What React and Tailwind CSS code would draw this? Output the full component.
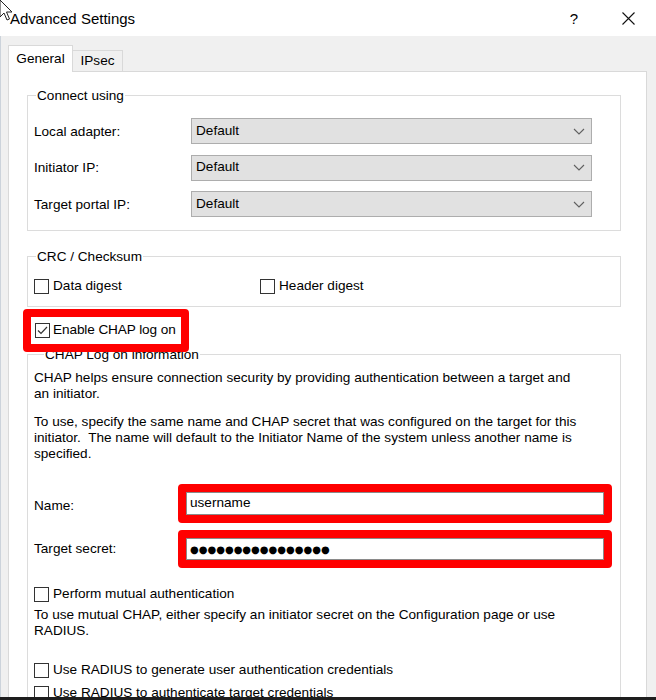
import React from 'react';

const font = "font-['Liberation_Sans',Arial,sans-serif]";

function Check({ checked }) {
  return (
    <span className="flex h-[15px] w-[15px] shrink-0 items-center justify-center border border-[#333] bg-white">
      {checked && (
        <svg width="13" height="13" viewBox="0 0 13 13" fill="none">
          <path d="M2 6.5 L5 9.5 L11 3" stroke="#333" strokeWidth="1.2" />
        </svg>
      )}
    </span>
  );
}

function CheckRow({ label, checked, className = '' }) {
  return (
    <div className={`flex h-[16px] items-center gap-[4px] ${className}`}>
      <Check checked={checked} />
      <span className="leading-[16px]">{label}</span>
    </div>
  );
}

function Combo({ label }) {
  return (
    <div className="flex h-[26px] items-center">
      <span className="w-[157px] shrink-0 pt-[2px]">{label}</span>
      <div className="flex h-[26px] w-[401px] items-center justify-between border border-[#adadad] bg-[#e1e1e1] pl-[4px] pr-[6px]">
        <span>Default</span>
        <svg width="12" height="7" viewBox="0 0 12 7" fill="none">
          <path d="M1 1 L6 6 L11 1" stroke="#606060" strokeWidth="1.1" />
        </svg>
      </div>
    </div>
  );
}

function Legend({ children, className = '' }) {
  return (
    <div className={`-mt-[8.5px] w-fit bg-white px-[1px] leading-[16px] ${className}`}>{children}</div>
  );
}

export default function App() {
  return (
    <div className={`relative h-[700px] w-[656px] overflow-hidden bg-[#f0f0f0] text-[13.6px] text-black ${font}`}>
      {/* title bar */}
      <div className="flex h-[36px] items-center bg-white pl-[10px]">
        <span className="text-[15px] leading-none">Advanced Settings</span>
        <span className="ml-auto text-[15px] leading-none">?</span>
        <svg className="ml-[44px] mr-[21px]" width="13" height="13" viewBox="0 0 13 13">
          <path d="M0.5 0.5 L12.5 12.5 M12.5 0.5 L0.5 12.5" stroke="#111" strokeWidth="1.1" />
        </svg>
      </div>

      {/* cursor */}
      <svg className="absolute left-[-1px] top-[-1px]" width="16" height="24" viewBox="0 0 16 24">
        <path d="M1 1 L1 18 L5 14 L8 21 L10.5 20 L7.5 13 L13 13 Z" fill="white" stroke="#222" strokeWidth="1" />
      </svg>

      <div className="flex h-[664px] flex-col border-l border-[#ccd3db] pl-[7px] pr-[9px] pt-[9px]">
        {/* tabs */}
        <div className="flex h-[26px] items-end">
          <div className="relative z-10 -mb-px flex h-[27px] w-[65px] items-center justify-center border border-b-0 border-[#d9d9d9] bg-white">
            General
          </div>
          <div className="flex h-[21px] w-[50px] items-center justify-center border border-b-0 border-l-0 border-[#d9d9d9] bg-[#f0f0f0]">
            IPsec
          </div>
        </div>

        {/* tab page */}
        <div className="flex-1 border border-[#d9d9d9] bg-white pl-[18px] pr-[25px] pt-[23px]">
          <div className="border border-[#dcdcdc] pb-[13px] pl-[6px] pr-[28px]">
            <Legend className="ml-[2px]">Connect using</Legend>
            <div className="mt-[14.5px] flex flex-col gap-[10.5px]">
              <Combo label="Local adapter:" />
              <Combo label="Initiator IP:" />
              <Combo label="Target portal IP:" />
            </div>
          </div>

          <div className="mt-[25px] border border-[#dcdcdc] pb-[12px] pl-[6px]">
            <Legend className="ml-[2px]">CRC / Checksum</Legend>
            <div className="mt-[13.5px] flex">
              <CheckRow label="Data digest" className="w-[226px]" />
              <CheckRow label="Header digest" />
            </div>
          </div>

          <div className="relative z-10 -ml-[4px] mt-[2px] h-[43px] w-[166px] rounded-[4px] border-[8px] border-[#ff0000] pl-[4px] pt-[5px]">
            <div className="flex h-[16px] items-center gap-[3px]">
              <Check checked />
              <span className="leading-[16px] tracking-[-0.1px]">Enable CHAP log on</span>
            </div>
          </div>

          <div className="mt-[2px] h-[400px] border border-[#dcdcdc] pl-[6px] pr-[8px]">
            <Legend className="ml-[10px]">CHAP Log on information</Legend>
            <p className="mt-[7.5px] leading-[16px]">
              CHAP helps ensure connection security by providing authentication between a target and
              <br />
              an initiator.
            </p>
            <p className="mt-[12px] leading-[16px]">
              To use, specify the same name and CHAP secret that was configured on the target for this
              <br />
              initiator.&nbsp; The name will default to the Initiator Name of the system unless another name is
              <br />
              specified.
            </p>

            <div className="mt-[22px] flex items-center">
              <span className="w-[144px] shrink-0 pt-[5px]">Name:</span>
              <div className="h-[39px] w-[434px] rounded-[4px] border-[8px] border-[#ff0000]">
                <div className="flex h-full items-center border border-[#8a8a8a] bg-white pl-[3px]">username</div>
              </div>
            </div>
            <div className="mt-[7px] flex items-center">
              <span className="w-[144px] shrink-0">Target secret:</span>
              <div className="h-[38px] w-[434px] rounded-[4px] border-[8px] border-[#ff0000]">
                <div className="flex h-full items-center border border-[#8a8a8a] bg-white pl-[3px] text-[10px] tracking-[0px] font-['DejaVu_Sans',sans-serif]">
                  ●●●●●●●●●●●●●●●●
                </div>
              </div>
            </div>

            <CheckRow label="Perform mutual authentication" className="mt-[18px]" />
            <p className="mt-[5px] leading-[16px]">
              To use mutual CHAP, either specify an initiator secret on the Configuration page or use
              <br />
              RADIUS.
            </p>
            <CheckRow label="Use RADIUS to generate user authentication credentials" className="mt-[23px]" />
            <CheckRow label="Use RADIUS to authenticate target credentials" className="mt-[7px]" />
          </div>
        </div>
      </div>

      <div className="absolute bottom-0 left-0 right-0 h-[3px] bg-[#1e1e1e]" />
    </div>
  );
}
